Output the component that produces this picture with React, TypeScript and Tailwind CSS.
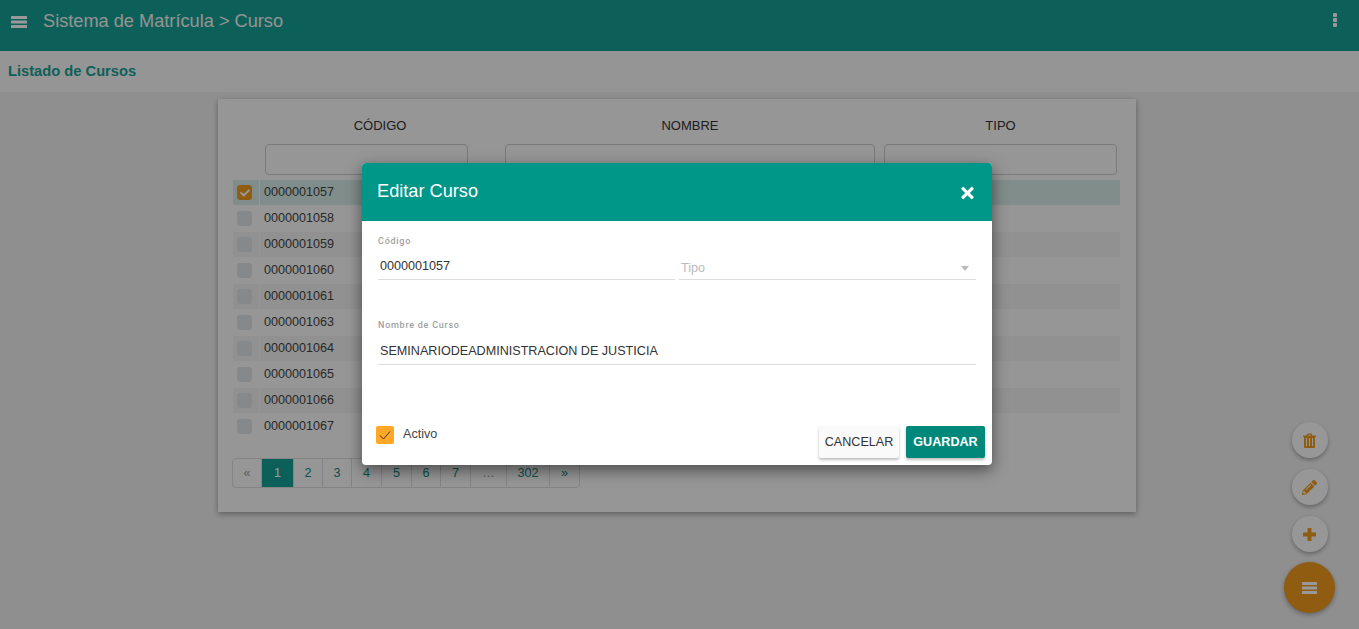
import React from 'react';
import { FaCheck, FaPencilAlt, FaTimes } from 'react-icons/fa';

const codes = [
  '0000001057',
  '0000001058',
  '0000001059',
  '0000001060',
  '0000001061',
  '0000001063',
  '0000001064',
  '0000001065',
  '0000001066',
  '0000001067',
];

const pages = [
  { label: '«', width: 'w-[29px]', muted: true },
  { label: '1', width: 'w-[32px]', active: true },
  { label: '2', width: 'w-[29px]' },
  { label: '3', width: 'w-[29px]' },
  { label: '4', width: 'w-[30px]' },
  { label: '5', width: 'w-[30px]' },
  { label: '6', width: 'w-[29px]' },
  { label: '7', width: 'w-[30px]' },
  { label: '…', width: 'w-[36px]', muted: true },
  { label: '302', width: 'w-[43px]' },
  { label: '»', width: 'w-[29px]' },
];

function Bars({ className }: { className: string }) {
  return (
    <svg viewBox="0 0 16 12" className={className} fill="currentColor" preserveAspectRatio="none">
      <rect x="0" y="0" width="16" height="3" rx="0.5" />
      <rect x="0" y="4.5" width="16" height="3" rx="0.5" />
      <rect x="0" y="9" width="16" height="3" rx="0.5" />
    </svg>
  );
}

function CourseRow({ code, index }: { code: string; index: number }) {
  const selected = index === 0;
  const tint = selected ? 'bg-[#d5ece8]' : index % 2 === 0 ? 'bg-[#f2f2f2]' : 'bg-transparent';
  return (
    <div className="flex h-[25px] gap-px">
      <div className={`flex w-[26px] items-center pl-[4px] ${tint}`}>
        {selected ? (
          <span className="flex h-[15px] w-[15px] items-center justify-center rounded-[3px] bg-[#ee9a1e] text-white">
            <FaCheck className="h-[10px] w-[10px]" />
          </span>
        ) : (
          <span className="h-[15px] w-[15px] rounded-[3px] bg-[#e0e4e8]" />
        )}
      </div>
      <div className={`flex flex-1 items-center pl-[4px] text-[12.6px] text-[#444] ${tint}`}>{code}</div>
    </div>
  );
}

function SmallFab({ children }: { children: React.ReactNode }) {
  return (
    <button className="flex h-9 w-9 items-center justify-center rounded-full bg-[#fcfcfc] text-[#ee9a1e] shadow-[0_2px_4px_rgba(0,0,0,0.3)]">
      {children}
    </button>
  );
}

export default function App() {
  return (
    <div className="relative h-screen overflow-hidden bg-[#efefef] font-['Liberation_Sans',Arial,sans-serif]">
      <header className="flex h-[51px] items-start justify-between bg-[#17a094] pl-[11px] pr-[22px] pt-[11px] text-white">
        <div className="flex items-center gap-[16px]">
          <Bars className="h-[12px] w-[16px] text-white" />
          <span className="text-[18.2px] leading-[21px] text-[#f5f5f5]">Sistema de Matrícula &gt; Curso</span>
        </div>
        <svg viewBox="0 0 4 14" className="mt-[2px] h-[14px] w-[4px]" fill="currentColor">
          <rect x="0" y="0" width="4" height="4" rx="1" />
          <rect x="0" y="5" width="4" height="4" rx="1" />
          <rect x="0" y="10" width="4" height="4" rx="1" />
        </svg>
      </header>

      <div className="flex h-[41px] items-center bg-[#f8f8f8] pl-[8px] text-[14.7px] font-bold text-[#17a094]">
        Listado de Cursos
      </div>

      <main className="ml-[218px] mt-[7px] h-[413px] w-[918px] bg-[#fafafa] pl-[15px] pr-[16px] pt-[17px] shadow-[0_2px_6px_rgba(0,0,0,0.35)]">
        <div className="flex text-[13px] text-[#333]">
          <div className="ml-[30px] w-[242px]">
            <div className="h-[28px] w-[234px] pt-px text-center leading-[18px]">CÓDIGO</div>
            <div className="ml-[2px] h-[31px] w-[203px] rounded-[4px] border border-[#ccc]" />
          </div>
          <div className="w-[379px]">
            <div className="h-[28px] w-[370px] pt-px text-center leading-[18px]">NOMBRE</div>
            <div className="h-[31px] w-[370px] rounded-[4px] border border-[#ccc]" />
          </div>
          <div className="w-[233px]">
            <div className="h-[28px] pt-px text-center leading-[18px]">TIPO</div>
            <div className="h-[31px] rounded-[4px] border border-[#ccc]" />
          </div>
        </div>

        <div className="mt-[5px] flex flex-col gap-px">
          {codes.map((code, index) => (
            <CourseRow key={code} code={code} index={index} />
          ))}
        </div>

        <nav className="ml-[-1px] mt-[19px] flex h-[30px] w-fit overflow-hidden rounded-[4px] border border-[#ddd] text-[12.6px]">
          {pages.map((page) => (
            <span
              key={page.label}
              className={`flex items-center justify-center border-r border-[#ddd] last:border-r-0 ${page.width} ${
                page.active ? 'bg-[#17a094] text-white' : page.muted ? 'text-[#999]' : 'text-[#12877c]'
              }`}
            >
              {page.label}
            </span>
          ))}
        </nav>
      </main>

      <div className="absolute bottom-[16px] left-[1284px] flex w-[51px] flex-col items-center gap-[11px]">
        <SmallFab>
          <svg viewBox="0 0 13 15" className="h-[15px] w-[13px]" fill="currentColor">
            <path d="M0 2.5h3.6l.8-2h4.2l.8 2H13V4h-1v10a1 1 0 0 1-1 1H2a1 1 0 0 1-1-1V4H0zM4.9 2.5h3.2l-.3-.8H5.2zM3 5v8h1V5zm3 0v8h1V5zm3 0v8h1V5z" fillRule="evenodd" />
          </svg>
        </SmallFab>
        <SmallFab>
          <FaPencilAlt className="h-[15px] w-[15px]" />
        </SmallFab>
        <SmallFab>
          <svg viewBox="0 0 13 13" className="h-[13px] w-[13px]" fill="currentColor">
            <path d="M4.5 0.5a.5.5 0 0 1 .5-.5h3a.5.5 0 0 1 .5.5v4h4a.5.5 0 0 1 .5.5v3a.5.5 0 0 1-.5.5h-4v4a.5.5 0 0 1-.5.5H5a.5.5 0 0 1-.5-.5v-4h-4A.5.5 0 0 1 0 8V5a.5.5 0 0 1 .5-.5h4z" />
          </svg>
        </SmallFab>
        <button className="-mt-px flex h-[51px] w-[51px] items-center justify-center rounded-full bg-[#ee9a1e] text-white shadow-[0_2px_5px_rgba(0,0,0,0.3)]">
          <Bars className="h-[12px] w-[15px]" />
        </button>
      </div>

      <div className="absolute inset-0 bg-black/40" />

      <section className="absolute left-[362px] top-[163px] h-[302px] w-[630px] overflow-hidden rounded-[4px] bg-white shadow-[0_5px_15px_rgba(0,0,0,0.5)]">
        <div className="flex h-[58px] items-center justify-between bg-[#009688] pl-[15px] pr-[18px] text-white">
          <h2 className="text-[18.2px]">Editar Curso</h2>
          <FaTimes className="mt-[2px] h-[18px] w-[13px]" />
        </div>

        <div className="px-[16px] pt-[15px]">
          <label className="block font-['Roboto',sans-serif] text-[9px] font-medium leading-[10px] tracking-[0.75px] text-[#a0a0a0]">
            Código
          </label>
          <div className="mt-[3px] flex gap-[4px]">
            <div className="h-[31px] w-[297px] border-b border-[#ddd] pl-[2px] pt-[9px] text-[12.6px] leading-[16px] text-[#333]">
              0000001057
            </div>
            <div className="flex h-[31px] w-[297px] items-center justify-between border-b border-[#ddd] pl-[2px] pr-[7px] pt-[8px] text-[12.6px] text-[#bbb]">
              <span>Tipo</span>
              <span className="h-0 w-0 border-x-[4.5px] border-t-[5px] border-x-transparent border-t-[#bbb]" />
            </div>
          </div>

          <label className="mt-[40px] block font-['Roboto',sans-serif] text-[9px] font-medium leading-[10px] tracking-[0.75px] text-[#a0a0a0]">
            Nombre de Curso
          </label>
          <div className="mt-[4px] h-[31px] border-b border-[#ddd] pl-[2px] pt-[9px] text-[12.6px] leading-[16px] text-[#333]">
            SEMINARIODEADMINISTRACION DE JUSTICIA
          </div>

          <div className="-ml-[2px] mt-[61px] flex items-start justify-between">
            <div className="flex items-start gap-[9px]">
              <span className="flex h-[18px] w-[18px] items-center justify-center rounded-[2px] bg-[#ffa726]">
                <svg viewBox="0 0 14 14" className="h-[14px] w-[14px]" fill="none" stroke="#333" strokeWidth="1">
                  <path d="M2 7.5 L5.5 11 L12 3.5" />
                </svg>
              </span>
              <span className="text-[12.6px] leading-[16px] text-[#444]">Activo</span>
            </div>
            <div className="-mr-[9px] flex gap-[7px]">
              <button className="h-[32px] w-[80px] rounded-[2px] bg-[#fafafa] text-[12.6px] text-[#333] shadow-[0_2px_3px_rgba(0,0,0,0.25)]">
                CANCELAR
              </button>
              <button className="h-[32px] w-[79px] rounded-[2px] bg-[#00897b] text-[12.6px] font-bold text-white shadow-[0_2px_3px_rgba(0,0,0,0.25)]">
                GUARDAR
              </button>
            </div>
          </div>
        </div>
      </section>
    </div>
  );
}
